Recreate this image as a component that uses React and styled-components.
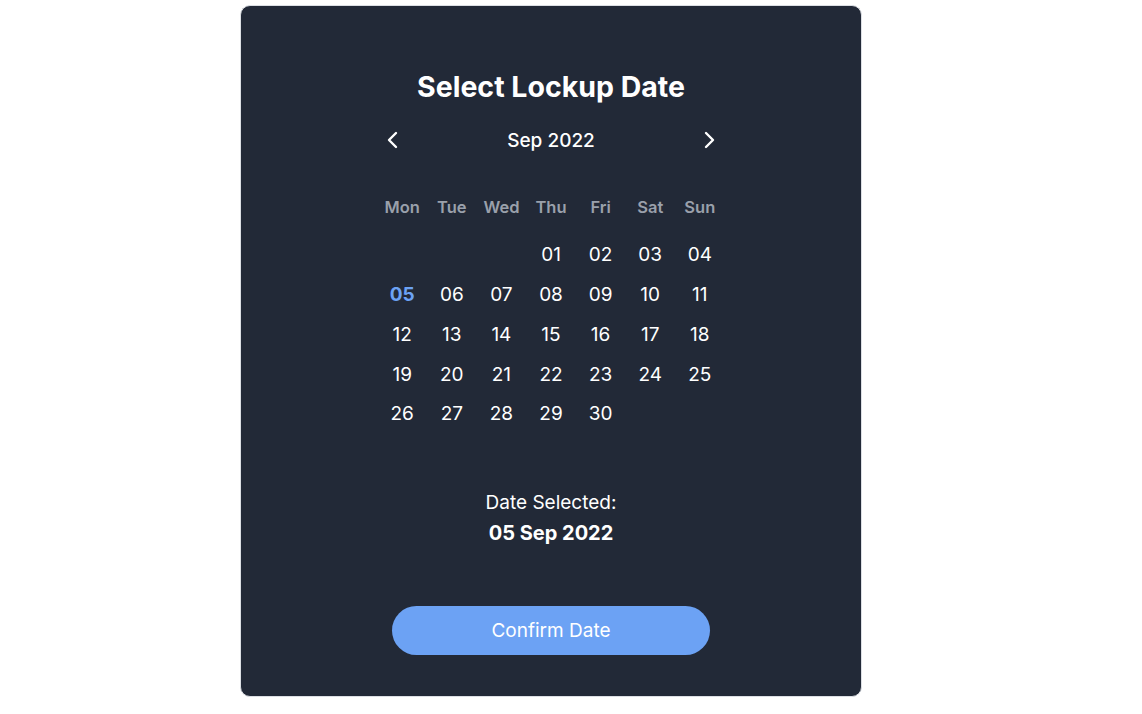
import React from "react";
import styled, { createGlobalStyle } from "styled-components";

const GlobalStyle = createGlobalStyle`
  html, body {
    margin: 0;
    padding: 0;
    background: #ffffff;
    font-family: Inter, "Liberation Sans", sans-serif;
  }
`;

const Page = styled.div`
  padding: 5px 0 0 240px;
`;

const Card = styled.div`
  box-sizing: border-box;
  width: 622px;
  height: 692px;
  background: #222937;
  border: 1px solid #dcdfe4;
  border-radius: 10px;
  padding: 63px 0 40px;
  display: flex;
  flex-direction: column;
  align-items: center;
  color: #ffffff;
`;

const Title = styled.h1`
  margin: 0;
  font-size: 28.5px;
  line-height: 36px;
  font-weight: 700;
`;

const Nav = styled.div`
  margin-top: 20px;
  width: 340px;
  height: 30px;
  display: flex;
  align-items: center;
  justify-content: space-between;
`;

const NavButton = styled.button`
  background: none;
  border: none;
  padding: 0;
  width: 22px;
  height: 30px;
  display: flex;
  align-items: center;
  justify-content: center;
  color: #ffffff;
  cursor: pointer;
`;

const MonthLabel = styled.span`
  font-size: 19px;
  font-weight: 500;
`;

const Grid = styled.div`
  display: grid;
  grid-template-columns: repeat(7, 49.6px);
  grid-auto-rows: ${(p) => p.rowHeight};
  margin-top: ${(p) => p.gap};
  align-items: center;
  justify-items: center;
`;

const WeekDay = styled.span`
  font-size: 16.5px;
  font-weight: 600;
  color: #9aa0ab;
`;

const Day = styled.span`
  font-size: 19px;
  font-weight: ${(p) => (p.selected ? 700 : 400)};
  color: ${(p) => (p.selected ? "#6ca2f4" : "#ffffff")};
  cursor: pointer;
`;

const Selected = styled.div`
  margin-top: 54px;
  text-align: center;
  font-size: 19px;
  line-height: 30px;
`;

const SelectedValue = styled.div`
  font-size: 20px;
  font-weight: 700;
`;

const ConfirmButton = styled.button`
  margin-top: 58px;
  width: 318px;
  height: 49px;
  border: none;
  border-radius: 25px;
  background: #6ca2f4;
  color: #ffffff;
  font-family: Inter, "Liberation Sans", sans-serif;
  font-size: 19px;
  cursor: pointer;
`;

function Chevron({ dir }) {
  const d = dir === "left" ? "M9 2 L2 9 L9 16" : "M2 2 L9 9 L2 16";
  return (
    <svg width="11" height="18" viewBox="0 0 11 18" fill="none">
      <path d={d} stroke="currentColor" strokeWidth="2.4" strokeLinecap="round" strokeLinejoin="round" />
    </svg>
  );
}

const weekDays = ["Mon", "Tue", "Wed", "Thu", "Fri", "Sat", "Sun"];

export default function App() {
  const [selected, setSelected] = React.useState(5);
  const cells = [];
  for (let i = 0; i < 3; i++) cells.push(null);
  for (let d = 1; d <= 30; d++) cells.push(d);
  const pad = (n) => String(n).padStart(2, "0");

  return (
    <>
      <GlobalStyle />
      <Page>
        <Card>
          <Title>Select Lockup Date</Title>
          <Nav>
            <NavButton aria-label="Previous month">
              <Chevron dir="left" />
            </NavButton>
            <MonthLabel>Sep 2022</MonthLabel>
            <NavButton aria-label="Next month">
              <Chevron dir="right" />
            </NavButton>
          </Nav>
          <Grid rowHeight="24px" gap="40px">
            {weekDays.map((w) => (
              <WeekDay key={w}>{w}</WeekDay>
            ))}
          </Grid>
          <Grid rowHeight="39.75px" gap="16px">
            {cells.map((d, i) =>
              d ? (
                <Day key={i} selected={d === selected} onClick={() => setSelected(d)}>
                  {pad(d)}
                </Day>
              ) : (
                <span key={i} />
              )
            )}
          </Grid>
          <Selected>
            <div>Date Selected:</div>
            <SelectedValue>{pad(selected)} Sep 2022</SelectedValue>
          </Selected>
          <ConfirmButton>Confirm Date</ConfirmButton>
        </Card>
      </Page>
    </>
  );
}
